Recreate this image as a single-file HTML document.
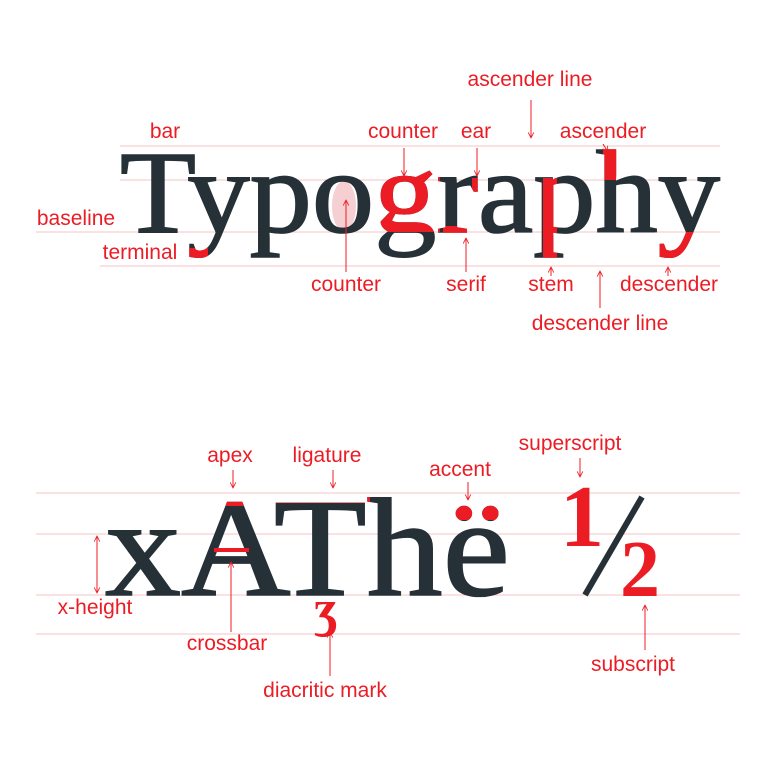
<!DOCTYPE html>
<html><head><meta charset="utf-8"><style>
html,body{margin:0;padding:0;background:#fff;}
svg{display:block}
.l{font-family:"Liberation Sans Narrow","Liberation Sans",sans-serif;font-size:21px;fill:#ec1c24;text-anchor:middle}
.g{font-family:"Liberation Serif",serif;fill:#263037;stroke:#263037;stroke-width:1.6}
</style></head><body>
<svg width="770" height="770" viewBox="0 0 770 770" xmlns="http://www.w3.org/2000/svg">
<defs>
<marker id="ah" viewBox="0 0 10 10" refX="9" refY="5" markerWidth="7" markerHeight="7" orient="auto-start-reverse" markerUnits="userSpaceOnUse"><path d="M1,1 L9,5 L1,9" fill="none" stroke="#ec1c24" stroke-width="1.2"/></marker>
<clipPath id="c1">
<rect x="378" y="170" width="62" height="62"/>
<rect x="472" y="178" width="14" height="14"/>
<rect x="443" y="226" width="30" height="8"/>
<rect x="543" y="178" width="14" height="82"/>
<rect x="603" y="140" width="16" height="40"/>
<rect x="655" y="232" width="40" height="36"/>
<rect x="188" y="248" width="20" height="22"/>
</clipPath>
<clipPath id="c2">
<rect x="210" y="480" width="40" height="26"/>
<rect x="270" y="480" width="100" height="23"/>
<rect x="420" y="480" width="80" height="40"/>
</clipPath>
</defs>
<g stroke="#f4c4c6" stroke-width="1">
<line x1="120" y1="146" x2="720" y2="146"/>
<line x1="120" y1="180" x2="720" y2="180"/>
<line x1="36" y1="232" x2="720" y2="232"/>
<line x1="100" y1="266" x2="720" y2="266"/>
<line x1="36" y1="493" x2="740" y2="493"/>
<line x1="36" y1="534" x2="740" y2="534"/>
<line x1="36" y1="595" x2="740" y2="595"/>
<line x1="36" y1="634" x2="740" y2="634"/>
</g>
<ellipse cx="344" cy="206" rx="12" ry="25" fill="#f5cfd1"/>
<text class="g" x="120" y="232" font-size="118" textLength="600" lengthAdjust="spacingAndGlyphs">Typography</text>
<text class="g" x="120" y="232" font-size="118" textLength="600" lengthAdjust="spacingAndGlyphs" style="fill:#ec1c24;stroke:#ec1c24" clip-path="url(#c1)">Typography</text>
<text class="g" x="105" y="595" font-size="140" textLength="405" lengthAdjust="spacingAndGlyphs">xAThë</text>
<text class="g" x="105" y="595" font-size="140" textLength="405" lengthAdjust="spacingAndGlyphs" style="fill:#ec1c24;stroke:#ec1c24" clip-path="url(#c2)">xAThë</text>
<rect x="214" y="548" width="35" height="4" fill="#ec1c24"/>
<text x="314" y="626" font-family="Liberation Serif,serif" font-weight="bold" font-size="52" fill="#ec1c24">ʒ</text>
<text x="560" y="546" font-family="Liberation Serif,serif" font-weight="bold" font-size="88" fill="#ec1c24">1</text>
<line x1="642" y1="497" x2="585" y2="595" stroke="#263037" stroke-width="6"/>
<text x="620" y="596" font-family="Liberation Serif,serif" font-weight="bold" font-size="80" fill="#ec1c24">2</text>
<g class="l">
<text x="530" y="86">ascender line</text>
<text x="165" y="138">bar</text>
<text x="403" y="138">counter</text>
<text x="476" y="138">ear</text>
<text x="603" y="138">ascender</text>
<text x="76" y="225">baseline</text>
<text x="140" y="259">terminal</text>
<text x="346" y="291">counter</text>
<text x="466" y="291">serif</text>
<text x="551" y="291">stem</text>
<text x="669" y="291">descender</text>
<text x="600" y="330">descender line</text>
<text x="230" y="462">apex</text>
<text x="327" y="462">ligature</text>
<text x="460" y="476">accent</text>
<text x="570" y="450">superscript</text>
<text x="95" y="614">x-height</text>
<text x="227" y="650">crossbar</text>
<text x="325" y="697">diacritic mark</text>
<text x="633" y="671">subscript</text>
</g>
<g stroke="#ec1c24" stroke-width="1" fill="none">
<line x1="531" y1="100" x2="531" y2="138" marker-end="url(#ah)"/>
<line x1="404" y1="148" x2="404" y2="176" marker-end="url(#ah)"/>
<line x1="477" y1="148" x2="477" y2="176" marker-end="url(#ah)"/>
<line x1="603" y1="144" x2="608" y2="152" marker-end="url(#ah)"/>
<line x1="346" y1="272" x2="346" y2="200" marker-end="url(#ah)"/>
<line x1="466" y1="272" x2="466" y2="238" marker-end="url(#ah)"/>
<line x1="551" y1="276" x2="551" y2="267" marker-end="url(#ah)"/>
<line x1="600" y1="308" x2="600" y2="271" marker-end="url(#ah)"/>
<line x1="668" y1="276" x2="668" y2="267" marker-end="url(#ah)"/>
<line x1="233" y1="470" x2="233" y2="488" marker-end="url(#ah)"/>
<line x1="333" y1="470" x2="333" y2="488" marker-end="url(#ah)"/>
<line x1="468" y1="482" x2="468" y2="500" marker-end="url(#ah)"/>
<line x1="580" y1="458" x2="580" y2="477" marker-end="url(#ah)"/>
<line x1="97" y1="536" x2="97" y2="593" marker-start="url(#ah)" marker-end="url(#ah)"/>
<line x1="231" y1="632" x2="231" y2="562" marker-end="url(#ah)"/>
<line x1="330" y1="676" x2="330" y2="632" marker-end="url(#ah)"/>
<line x1="645" y1="650" x2="645" y2="605" marker-end="url(#ah)"/>
</g>
</svg>
</body></html>
